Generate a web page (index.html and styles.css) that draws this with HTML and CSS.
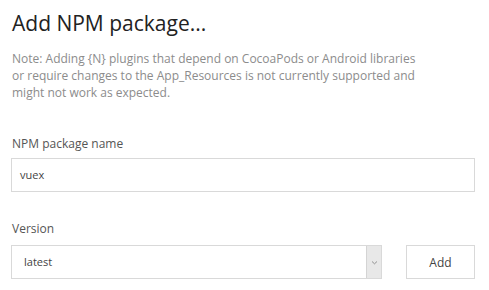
FILE: index.html
```html
<!DOCTYPE html>
<html>
<head>
<meta charset="utf-8">
<link rel="stylesheet" href="styles.css">
</head>
<body>
<div class="dialog">
  <h1 class="title">Add NPM package...</h1>
  <p class="note">Note: Adding {N} plugins that depend on CocoaPods or Android libraries or require changes to the App_Resources is not currently supported and might not work as expected.</p>
  <div class="field field-name">
    <label class="label label-name">NPM package name</label>
    <div class="input">vuex</div>
  </div>
  <div class="field field-version">
    <label class="label">Version</label>
    <div class="row">
      <div class="select">
        <span class="select-value">latest</span>
        <span class="select-arrow"><svg width="7" height="5" viewBox="0 0 7 5"><path d="M1 1.5 L3.5 3.8 L6 1.5" fill="none" stroke="#888" stroke-width="0.9"/></svg></span>
      </div>
      <button class="btn">Add</button>
    </div>
  </div>
</div>
</body>
</html>
```

FILE: styles.css
```css
html, body {
  margin: 0;
  padding: 0;
  background: #fff;
}
body {
  font-family: "Open Sans", "DejaVu Sans", sans-serif;
}
.dialog {
  padding: 6px 14px 0 11px;
  width: 464px;
}
.title {
  margin: 0 0 0 1px;
  font-size: 21px;
  font-weight: 400;
  line-height: 34px;
  color: #222;
}
.note {
  margin: 10px 0 0 1px;
  font-size: 12px;
  line-height: 17px;
  color: #8c8c8c;
  width: 410px;
}
.field-name {
  margin-top: 34px;
}
.field-version {
  margin-top: 28px;
}
.label {
  display: block;
  margin-left: 1px;
  font-size: 12px;
  line-height: 18px;
  color: #555;
  margin-bottom: 7px;
}
.label-name {
  margin-bottom: 5px;
}
.input {
  box-sizing: border-box;
  height: 34px;
  border: 1px solid #d9d9d9;
  padding: 0 8px;
  font-size: 11px;
  line-height: 32px;
  color: #444;
}
.row {
  display: flex;
  gap: 24px;
}
.select {
  box-sizing: border-box;
  width: 371px;
  height: 34px;
  border: 1px solid #d9d9d9;
  display: flex;
  align-items: stretch;
}
.select-value {
  flex: 1;
  padding-left: 12px;
  font-size: 11px;
  line-height: 32px;
  color: #444;
}
.select-arrow {
  width: 14px;
  background: #e8e8e8;
  border-left: 1px solid #d4d4d4;
  display: flex;
  align-items: center;
  justify-content: center;
}
.btn {
  box-sizing: border-box;
  width: 69px;
  height: 34px;
  border: 1px solid #d9d9d9;
  background: #fff;
  font-family: "Open Sans", sans-serif;
  font-size: 12px;
  color: #444;
  padding: 0;
}
```
